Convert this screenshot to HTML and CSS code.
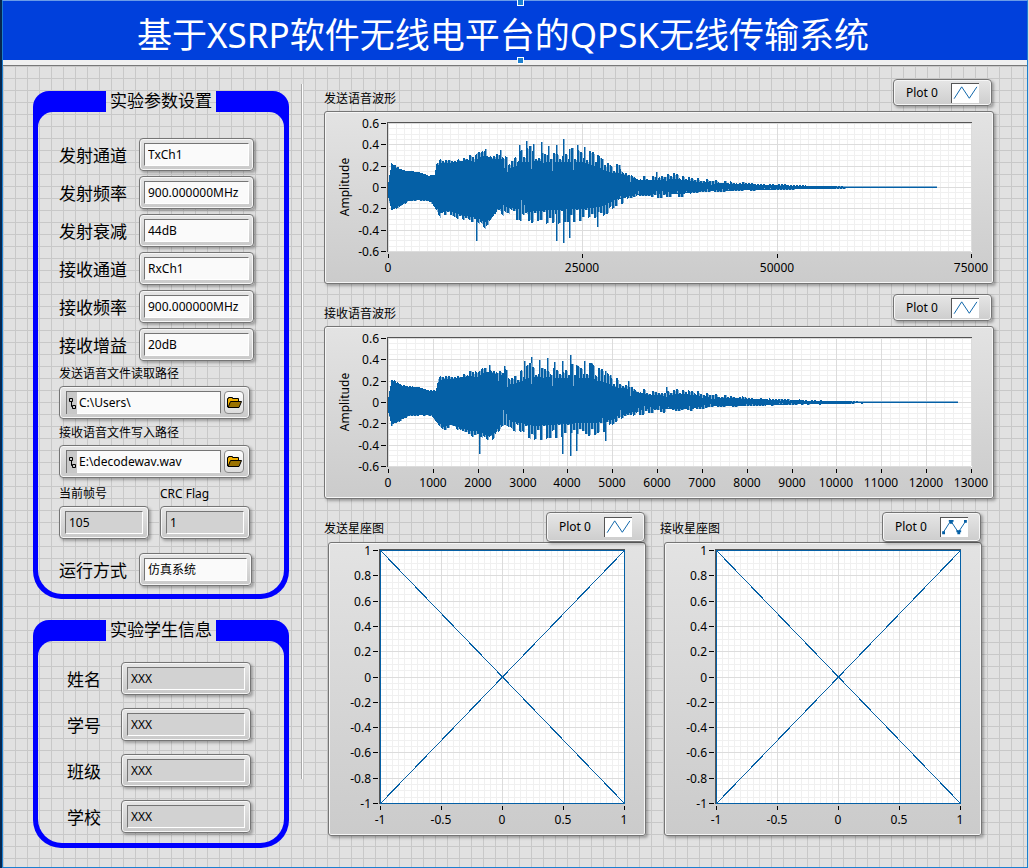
FILE: index.html
```html
<!DOCTYPE html>
<html lang="zh-CN">
<head>
    <meta charset="utf-8">
    <title>基于XSRP软件无线电平台的QPSK无线传输系统</title>
    <link rel="stylesheet" href="styles.css">
</head>
<body>
    <svg class="defs" width="0" height="0" aria-hidden="true">
        <symbol id="folder" viewBox="0 0 15 11">
            <path d="M0.5 10V1.5H1.5V0.5H5.5V1.5H11.5V4" fill="#f0b000" stroke="#000"/>
            <path d="M1 10.5L3.5 4.5H14.5L12 10.5Z" fill="#9a7200" stroke="#000"/>
        </symbol>
        <symbol id="path" viewBox="0 0 8 13">
            <path d="M1.5 1.5h3v3h-3zM4.5 8.5h3v3h-3zM3.5 5v4.5h1" fill="none" stroke="#000"/>
        </symbol>
        <symbol id="line" viewBox="0 0 28 20">
            <path d="M2 15.5L10 3L18 15L26 3" fill="none" stroke="#0560a6"/>
        </symbol>
        <symbol id="points" viewBox="0 0 28 20">
            <path d="M2 15.5L10 3L18 15L26 3" fill="none" stroke="#0560a6"/>
            <path d="M1 14h3v3h-3zM8 2h5v2h-1v2h-3v-2h-1zM16 13h5v2h-1v2h-3v-2h-1zM24 2h3v3h-3z" fill="#0560a6"/>
        </symbol>
    </svg>

    <div class="window">
        <header class="banner">
            <span class="handle handle-top"></span>
            <h1>基于XSRP软件无线电平台的QPSK无线传输系统</h1>
            <span class="handle handle-bottom"></span>
        </header>

        <main>
            <form class="sidebar">
                <section class="group">
                    <h2>实验参数设置</h2>
                    <div class="group-body params">
                        <div class="row">
                            <label for="txch">发射通道</label>
                            <div class="field"><select id="txch"><option>TxCh1</option></select></div>
                        </div>
                        <div class="row">
                            <label for="txfreq">发射频率</label>
                            <div class="field"><input type="text" id="txfreq" value="900.000000MHz"></div>
                        </div>
                        <div class="row">
                            <label for="txatt">发射衰减</label>
                            <div class="field"><input type="text" id="txatt" value="44dB"></div>
                        </div>
                        <div class="row">
                            <label for="rxch">接收通道</label>
                            <div class="field"><select id="rxch"><option>RxCh1</option></select></div>
                        </div>
                        <div class="row">
                            <label for="rxfreq">接收频率</label>
                            <div class="field"><input type="text" id="rxfreq" value="900.000000MHz"></div>
                        </div>
                        <div class="row">
                            <label for="rxgain">接收增益</label>
                            <div class="field"><input type="text" id="rxgain" value="20dB"></div>
                        </div>

                        <div class="stack">
                            <label for="readpath">发送语音文件读取路径</label>
                            <div class="field path">
                                <span class="path-icon"><svg width="8" height="13"><use href="#path"/></svg></span>
                                <input type="text" id="readpath" value="C:\Users\">
                                <button type="button" aria-label="浏览"><svg width="15" height="11"><use href="#folder"/></svg></button>
                            </div>
                        </div>
                        <div class="stack">
                            <label for="writepath">接收语音文件写入路径</label>
                            <div class="field path">
                                <span class="path-icon"><svg width="8" height="13"><use href="#path"/></svg></span>
                                <input type="text" id="writepath" value="E:\decodewav.wav">
                                <button type="button" aria-label="浏览"><svg width="15" height="11"><use href="#folder"/></svg></button>
                            </div>
                        </div>
                        <div class="pair">
                            <div class="stack">
                                <label for="frame">当前帧号</label>
                                <div class="field"><input type="text" id="frame" value="105" readonly></div>
                            </div>
                            <div class="stack">
                                <label for="crc">CRC Flag</label>
                                <div class="field"><input type="text" id="crc" value="1" readonly></div>
                            </div>
                        </div>
                        <div class="row mode">
                            <label for="mode">运行方式</label>
                            <div class="field"><select id="mode"><option>仿真系统</option></select></div>
                        </div>
                    </div>
                </section>

                <section class="group">
                    <h2>实验学生信息</h2>
                    <div class="group-body student">
                        <div class="row">
                            <label for="name">姓名</label>
                            <div class="field"><input type="text" id="name" value="XXX" readonly></div>
                        </div>
                        <div class="row">
                            <label for="number">学号</label>
                            <div class="field"><input type="text" id="number" value="XXX" readonly></div>
                        </div>
                        <div class="row">
                            <label for="class">班级</label>
                            <div class="field"><input type="text" id="class" value="XXX" readonly></div>
                        </div>
                        <div class="row">
                            <label for="school">学校</label>
                            <div class="field"><input type="text" id="school" value="XXX" readonly></div>
                        </div>
                    </div>
                </section>
            </form>

            <div class="divider"></div>

            <div class="charts">
                <section class="chart">
                    <div class="chart-head">
                        <h3>发送语音波形</h3>
                        <div class="legend">Plot 0 <svg width="28" height="20"><use href="#line"/></svg></div>
                    </div>
                    <div class="panel"><svg id="txwave" viewBox="0 0 668 171"></svg></div>
                </section>
                <section class="chart">
                    <div class="chart-head">
                        <h3>接收语音波形</h3>
                        <div class="legend">Plot 0 <svg width="28" height="20"><use href="#line"/></svg></div>
                    </div>
                    <div class="panel"><svg id="rxwave" viewBox="0 0 668 171"></svg></div>
                </section>
                <div class="constellations">
                    <section class="chart">
                        <div class="chart-head">
                            <h3>发送星座图</h3>
                            <div class="legend">Plot 0 <svg width="28" height="20"><use href="#line"/></svg></div>
                        </div>
                        <div class="panel"><svg id="txconst" viewBox="0 0 316 292"></svg></div>
                    </section>
                    <section class="chart">
                        <div class="chart-head">
                            <h3>接收星座图</h3>
                            <div class="legend">Plot 0 <svg width="28" height="20"><use href="#points"/></svg></div>
                        </div>
                        <div class="panel"><svg id="rxconst" viewBox="0 0 316 292"></svg></div>
                    </section>
                </div>
            </div>
        </main>
    </div>

    <script src="charts.js"></script>
</body>
</html>
```

FILE: styles.css
```css
* {
    box-sizing: border-box;
}
html {
    background: #f0f0f0;
}
body {
    margin: 0;
    border-left: 2px solid #06274f;
    border-right: 1px solid #dcdcdc;
    font-family: "Noto Sans", "Noto Sans CJK SC", sans-serif;
    font-size: 12px;
    line-height: 16px;
    color: #000;
}
.defs {
    position: absolute;
}
.window, .group-body, .group h2 {
    background-color: #e1e1e1;
    background-image:
        linear-gradient(to right, #c8c8c8 1px, transparent 1px),
        linear-gradient(to bottom, #c8c8c8 1px, transparent 1px);
    background-size: 12px 12px;
    background-position: 3px 6px;
    background-attachment: fixed;
}
.window {
    min-height: 100vh;
    border: 1px solid #1c7fd0;
    border-top-color: #6a9ce8;
}

/* banner */
.banner {
    position: relative;
    height: 65px;
    background: #0040dc;
    border-bottom: 1px solid #787878;
    box-shadow: inset 0 -5px 0 #f0f0f0;
}
.banner h1 {
    margin: 0;
    padding-top: 4px;
    padding-right: 24px;
    font-size: 35px;
    font-weight: 400;
    line-height: 60px;
    text-align: center;
    color: #fff;
}
.handle {
    position: absolute;
    left: 514px;
    width: 7px;
    height: 7px;
    background: #1c7fd0;
    border: 1px solid #fff;
}
.handle-top {
    top: -2px;
}
.handle-bottom {
    top: 56px;
}

main {
    display: grid;
    grid-template-columns: 268px 2px 1fr;
    padding: 0 33px 18px 30px;
}
.divider {
    margin: 18px 0 69px;
    background: #a8a8a8;
    border-right: 1px solid #fff;
}
.sidebar {
    margin: 25px 12px 0 0;
}

/* blue group boxes */
.group {
    background: #0000ff;
    border-radius: 16px 16px 28px 28px;
    padding: 0 5px 5px;
    margin-bottom: 21px;
}
.group:last-child {
    margin-bottom: 0;
}
.group h2 {
    width: 110px;
    height: 21px;
    margin: 0 auto;
    font-size: 17px;
    font-weight: 400;
    line-height: 20px;
    text-align: center;
}
.group-body {
    display: flex;
    flex-direction: column;
    border-radius: 15px 15px 24px 24px;
}
.params {
    gap: 5px;
    padding: 26px 34px 8px 21px;
}
.student {
    gap: 13px;
    padding: 21px 33px 10px 29px;
}
.row {
    display: flex;
    align-items: center;
}
.row label {
    flex: none;
    width: 80px;
    font-size: 17px;
    line-height: 26px;
    padding-top: 2px;
}
.student .row label {
    width: 54px;
}
.row .field {
    flex: 1;
}
.params .row {
    margin-right: -4px;
}
.params .mode {
    margin-top: 9px;
    margin-right: -2px;
}
.stack {
    display: flex;
    flex-direction: column;
    gap: 4px;
    min-width: 0;
}
.params > .stack + .stack {
    margin-top: 1px;
}
.pair {
    display: grid;
    grid-template-columns: 1fr 1fr;
    gap: 11px;
    margin-top: 3px;
}

/* controls */
.field {
    display: flex;
    height: 33px;
    padding: 4px;
    border: 1px solid #757575;
    border-radius: 4px;
    background: linear-gradient(#e6e6e6, #c9c9c9);
    box-shadow: inset 0 0 0 1px #f6f6f6, 2px 2px 3px rgba(0, 0, 0, 0.3);
}
.field input, .field select {
    flex: 1;
    min-width: 0;
    width: 100%;
    margin: 0;
    padding: 0 0 0 3px;
    border: 1px solid;
    border-color: #757575 #fff #fff #757575;
    border-radius: 0;
    outline: 0;
    background: #fafafa;
    font: inherit;
    color: #000;
    appearance: none;
}
.field input[readonly] {
    background: #d2d2d2;
}
.pair .field, .student .field {
    padding: 4px 5px;
}
.path {
    padding-left: 6px;
}
.path-icon {
    display: flex;
    align-items: center;
    padding: 0 1px;
    background: #c8c8c8;
    border-top: 1px solid #757575;
    border-left: 1px solid #757575;
}
.field.path input {
    border-left: 0;
    border-right-color: #757575;
    padding-left: 2px;
}
.path button {
    display: flex;
    align-items: center;
    justify-content: center;
    width: 20px;
    height: 23px;
    margin: 0 1px 0 3px;
    padding: 0;
    border: 1px solid #8a8a8a;
    border-radius: 4px;
    background: linear-gradient(#fff, #dcdcdc);
}

/* charts */
.charts {
    display: flex;
    flex-direction: column;
    gap: 10px;
    margin: 13px 0 0 21px;
    min-width: 0;
}
.chart-head {
    display: flex;
    align-items: center;
    justify-content: space-between;
    height: 27px;
    margin-bottom: 5px;
    padding-right: 2px;
}
.chart-head h3 {
    margin: 12px 0 0;
    font-size: 12px;
    font-weight: 400;
}
.legend {
    display: flex;
    align-items: center;
    justify-content: space-between;
    width: 99px;
    height: 100%;
    padding: 0 12px;
    border: 1px solid #757575;
    border-radius: 4px;
    background: linear-gradient(#e6e6e6, #cdcdcd);
    box-shadow: inset 0 0 0 1px #f6f6f6, 2px 2px 3px rgba(0, 0, 0, 0.3);
}
.legend svg {
    background: #fff;
    border-top: 1px solid #555;
    border-left: 1px solid #555;
}
.panel {
    border: 1px solid #757575;
    border-radius: 3px;
    background: linear-gradient(#e3e3e3, #cbcbcb);
    box-shadow: inset 0 0 0 1px #f6f6f6, 2px 2px 3px rgba(0, 0, 0, 0.3);
}
.panel svg {
    display: block;
    width: 100%;
    height: auto;
}
.panel text {
    font-size: 12px;
}
.constellations {
    display: grid;
    grid-template-columns: 1fr 1fr;
    gap: 14px;
    margin-top: 3px;
    padding-right: 12px;
}
.constellations .chart-head {
    height: 30px;
    margin-bottom: 0;
    padding-right: 1px;
}
.constellations .chart-head h3 {
    margin-top: 3px;
}
.constellations .panel {
    margin-left: 4px;
}
```

FILE: charts.js
```js
const NS = 'http://www.w3.org/2000/svg';

function add(svg, name, attrs, text) {
    const el = document.createElementNS(NS, name);
    for (const key in attrs) {
        el.setAttribute(key, attrs[key]);
    }
    if (text !== undefined) {
        el.textContent = text;
    }
    svg.appendChild(el);
}

function path(svg, d, stroke) {
    add(svg, 'path', { d: d, stroke: stroke, fill: 'none', 'shape-rendering': 'crispEdges' });
}

// box: left, right, top, bottom of the plot; x and y: tick labels and minor steps per tick
function axes(svg, box, x, y) {
    const w = box.right - box.left;
    const h = box.bottom - box.top;
    const nx = x.labels.length - 1;
    const ny = y.labels.length - 1;
    add(svg, 'rect', { x: box.left - 1, y: box.top - 1, width: w + 2, height: h + 2, fill: '#fff' });

    let minor = '';
    let major = '';
    let ticks = '';
    for (let i = 0; i <= nx * x.minor; i++) {
        const px = Math.round(box.left + w * i / (nx * x.minor)) + 0.5;
        const line = `M${px} ${box.top}V${box.bottom}`;
        if (i % x.minor) minor += line; else major += line;
    }
    for (let i = 0; i <= ny * y.minor; i++) {
        const py = Math.round(box.top + h * i / (ny * y.minor)) + 0.5;
        const line = `M${box.left} ${py}H${box.right}`;
        if (i % y.minor) minor += line; else major += line;
    }
    path(svg, minor, '#f0f0f0');
    path(svg, major, '#dcdcdc');
    path(svg, `M${box.left - 0.5} ${box.bottom + 1}V${box.top - 0.5}H${box.right + 1}`, '#555');

    x.labels.forEach((label, i) => {
        const px = Math.round(box.left + w * i / nx);
        ticks += `M${px + 0.5} ${box.bottom + 3}v4`;
        add(svg, 'text', { x: px, y: box.bottom + 21, 'text-anchor': 'middle' }, label);
    });
    y.labels.forEach((label, i) => {
        const py = Math.round(box.top + h * i / ny);
        ticks += `M${box.left - 7} ${py + 0.5}h5`;
        add(svg, 'text', { x: box.left - 9, y: py + 5, 'text-anchor': 'end' }, label);
    });
    path(svg, ticks, '#000');
}

// envelope of the speech signal, in plot units from the zero line
const upper = [[0, 5], [3, 25], [8, 21], [14, 18], [30, 16], [40, 12], [46, 13], [48, 25], [52, 29], [60, 29], [70, 31], [80, 33],
    [86, 31], [90, 36], [97, 38], [105, 34], [113, 34], [120, 30], [127, 34], [135, 42], [150, 43], [165, 41], [180, 41], [195, 41], [201, 37],
    [209, 34], [214, 29], [223, 24], [231, 23], [240, 17], [250, 12], [265, 11], [276, 13], [286, 14], [299, 11], [308, 9],
    [325, 7], [338, 6], [350, 5], [370, 4], [390, 3], [410, 2], [440, 1], [478, 0], [549, 0]];
const lower = [[0, 10], [3, 24], [10, 20], [20, 14], [30, 13], [42, 14], [47, 22], [52, 30], [60, 27], [70, 32], [80, 35],
    [88, 36], [97, 42], [103, 37], [110, 24], [120, 33], [130, 35], [140, 40], [150, 38], [161, 37], [180, 35], [190, 35],
    [200, 34], [215, 30], [225, 21], [240, 14], [250, 11], [260, 11], [275, 10], [292, 10], [308, 6], [325, 5], [350, 4],
    [370, 3], [400, 2], [440, 1], [478, 0], [549, 0]];
const peaks = [[97, 38], [112, 37], [131, 42], [138, 46], [145, 43], [153, 45], [160, 41], [168, 42], [175, 48], [181, 38],
    [189, 42], [196, 40], [209, 32], [214, 28], [231, 22], [268, 15]];
const dips = [[88, 54], [168, 54], [175, 56], [181, 51], [209, 40]];

function level(points, x) {
    for (let i = 1; i < points.length; i++) {
        if (x <= points[i][0]) {
            const [x0, y0] = points[i - 1];
            const [x1, y1] = points[i];
            return y0 + (y1 - y0) * (x - x0) / (x1 - x0);
        }
    }
    return 0;
}

function wave(id, labels, minor, stretch, gain) {
    const svg = document.getElementById(id);
    const box = { left: 63, right: 646, top: 11, bottom: 139 };
    const zero = 75;
    axes(svg, box, { labels: labels, minor: minor }, { labels: ['0.6', '0.4', '0.2', '0', '-0.2', '-0.4', '-0.6'], minor: 4 });
    add(svg, 'text', { transform: 'translate(24 75) rotate(-90)', 'text-anchor': 'middle' }, 'Amplitude');

    let seed = 20;
    const random = () => (seed = (seed * 16807) % 2147483647) / 2147483647;
    const end = Math.round(549 * stretch);
    let solid = '';
    let soft = '';
    let gaps = '';

    // one side of the wave: teeth two units wide with a shorter column between them
    function side(points, sign, shift) {
        let tooth = 1;
        for (let i = 0; i < end; i++) {
            const x = i / stretch;
            const rough = x < 48 ? 0.08 : x < 115 ? 0.18 : 0.4;
            const size = level(points, x) * gain;
            const step = (i + shift) % 3;
            if (step === 0) tooth = 1 - random() * rough;
            const full = Math.round(size * tooth);
            const valley = Math.round(size * (1 - rough));
            const px = box.left + i + 0.5;
            solid += `M${px} ${zero + 0.5}v${sign * ((step === 2 ? Math.min(valley, full) : full) + 0.5)}`;
            if (step === 2) {
                soft += `M${px} ${zero + 0.5}v${sign * full}`;
                if (x > 105 && x < 400 && random() < 0.15) {
                    gaps += `M${px} ${zero + sign * Math.round(size * (0.3 + random() * 0.4))}V${zero + sign * full}`;
                }
            }
        }
    }
    side(upper, -1, 0);
    side(lower, 1, 1);

    for (const [list, sign] of [[peaks, -1], [dips, 1]]) {
        for (const [x, y] of list) {
            const px = box.left + Math.round(x * stretch) + 0.5;
            const size = Math.round(y * gain);
            solid += `M${px} ${zero}v${sign * size}`;
            soft += `M${px + 1} ${zero}v${sign * size}`;
        }
    }
    soft += `M${box.left} ${zero - 0.5}H${box.left + end}`;
    path(svg, soft, '#82afd2');
    path(svg, solid, '#0560a6');
    path(svg, gaps, '#82afd2');
}

function constellation(id) {
    const svg = document.getElementById(id);
    const box = { left: 51, right: 295, top: 7, bottom: 260 };
    axes(svg, box,
        { labels: ['-1', '-0.5', '0', '0.5', '1'], minor: 10 },
        { labels: ['1', '0.8', '0.6', '0.4', '0.2', '0', '-0.2', '-0.4', '-0.6', '-0.8', '-1'], minor: 4 });
    path(svg, 'M51.5 7.5L295.5 260.5M295.5 7.5L51.5 260.5', '#0560a6');
    path(svg, 'M51.5 7.5H295.5V260.5H51.5Z', '#0560a6');
}

wave('txwave', ['0', '25000', '50000', '75000'], 25, 1, 1);
wave('rxwave', ['0', '1000', '2000', '3000', '4000', '5000', '6000', '7000', '8000', '9000', '10000', '11000', '12000', '13000'], 5, 1.038, 0.97);
constellation('txconst');
constellation('rxconst');
```
